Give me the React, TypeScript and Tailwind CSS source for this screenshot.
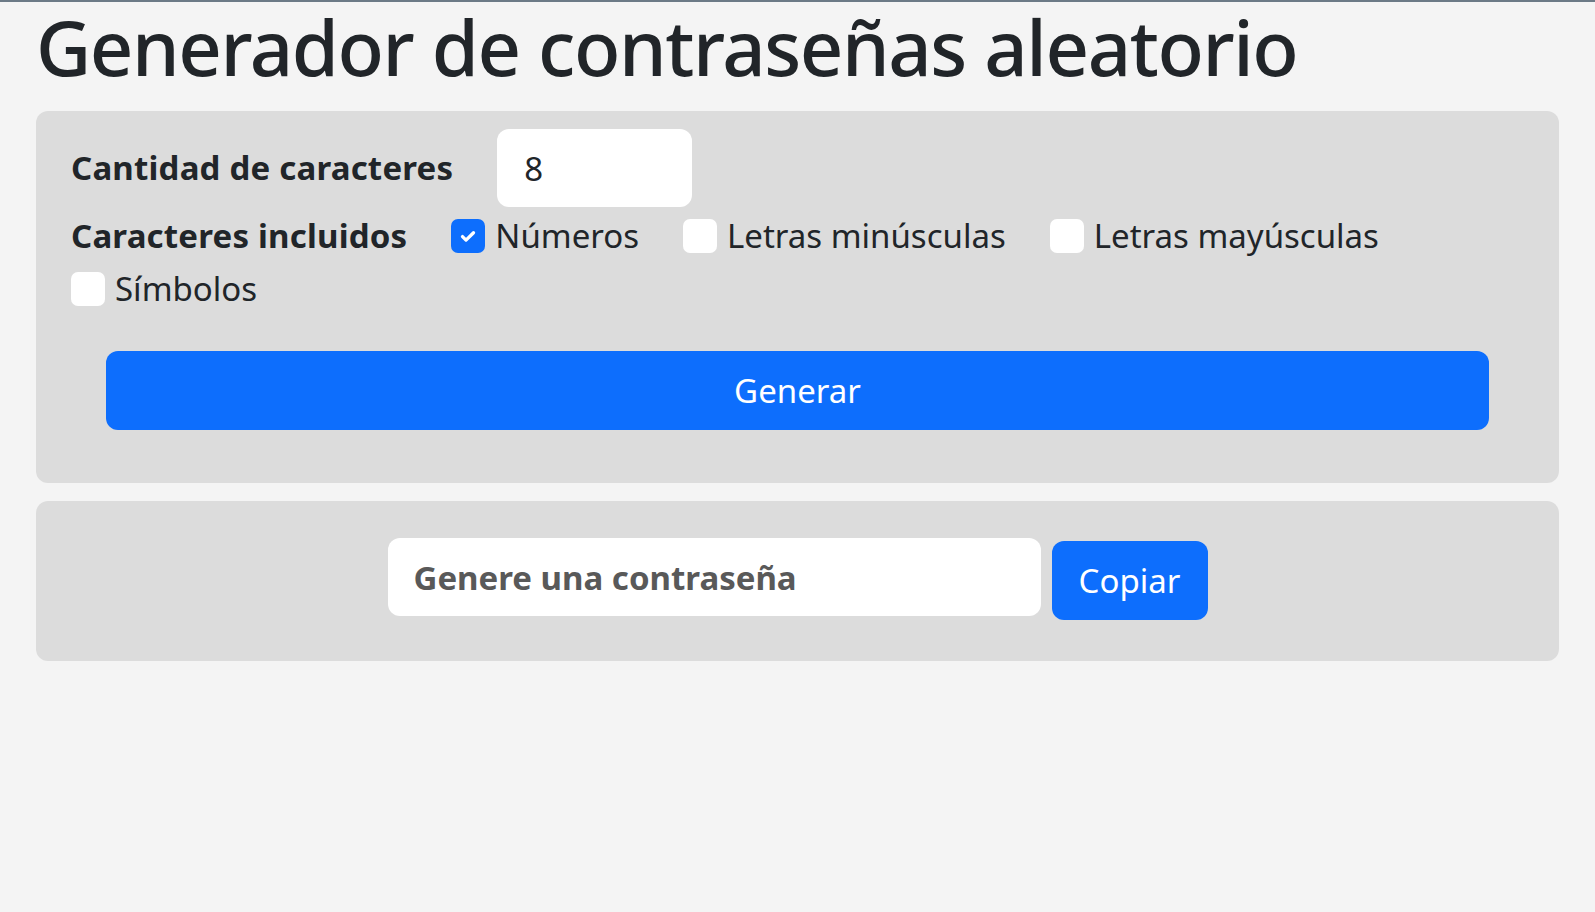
import { useState } from "react";

const font = { fontFamily: '"Noto Sans", "Open Sans", sans-serif' };

const options = [
  { id: "numeros", label: "Números" },
  { id: "minusculas", label: "Letras minúsculas" },
  { id: "mayusculas", label: "Letras mayúsculas" },
  { id: "simbolos", label: "Símbolos" },
];

function Check({ checked, onToggle }: { checked: boolean; onToggle: () => void }) {
  return (
    <button
      type="button"
      onClick={onToggle}
      className={`flex h-[34px] w-[34px] shrink-0 items-center justify-center rounded-[7px] ${
        checked ? "bg-[#0d6efd]" : "bg-white"
      }`}
    >
      {checked && (
        <svg viewBox="0 0 20 20" className="h-[22px] w-[22px]">
          <path d="M5 10.5l3.2 3.2L15 7" fill="none" stroke="white" strokeWidth="3" strokeLinecap="round" strokeLinejoin="round" />
        </svg>
      )}
    </button>
  );
}

export default function App() {
  const [length, setLength] = useState("8");
  const [selected, setSelected] = useState<string[]>(["numeros"]);

  const toggle = (id: string) =>
    setSelected((s) => (s.includes(id) ? s.filter((x) => x !== id) : [...s, id]));

  return (
    <div style={font} className="min-h-[912px] border-t-2 border-[#6c7a86] bg-[#f4f4f4] text-[#212529]">
      <div className="px-[36px]">
        <h1 className="pr-4 text-[76px] leading-[90px] font-medium tracking-[-1.4px]">
          Generador de contraseñas aleatorio
        </h1>

        <div className="mt-[19px] rounded-[12px] bg-[#dcdcdc] px-[35px] pt-[18px] pb-[53px]">
          <div className="flex items-center gap-[44px]">
            <span className="text-[33px] font-bold tracking-[0.2px]">Cantidad de caracteres</span>
            <input
              value={length}
              onChange={(e) => setLength(e.target.value)}
              className="h-[78px] w-[195px] rounded-[12px] bg-white px-[27px] text-[33px] outline-none"
            />
          </div>

          <div className="mt-[5px] flex flex-wrap items-center gap-x-[44px] gap-y-[5px] text-[33px] leading-[48px]">
            <span className="font-bold tracking-[0.2px]">Caracteres incluidos</span>
            {options.map((o) => (
              <label key={o.id} className="flex items-center gap-[10px]">
                <Check checked={selected.includes(o.id)} onToggle={() => toggle(o.id)} />
                <span>{o.label}</span>
              </label>
            ))}
          </div>

          <div className="mt-[38px] px-[35px]">
            <button
              type="button"
              className="h-[79px] w-full rounded-[12px] bg-[#0d6efd] text-[33px] text-white"
            >
              Generar
            </button>
          </div>
        </div>

        <div className="mt-[18px] flex items-start justify-center gap-[11px] rounded-[12px] bg-[#dcdcdc] pt-[37px] pb-[41px]">
          <input
            readOnly
            placeholder="Genere una contraseña"
            className="h-[78px] w-[653px] rounded-[12px] bg-white px-[26px] text-[33px] font-bold outline-none placeholder:text-[#595959]"
          />
          <button
            type="button"
            className="mt-[3px] h-[79px] w-[156px] rounded-[12px] bg-[#0d6efd] text-[33px] text-white"
          >
            Copiar
          </button>
        </div>
      </div>
    </div>
  );
}
